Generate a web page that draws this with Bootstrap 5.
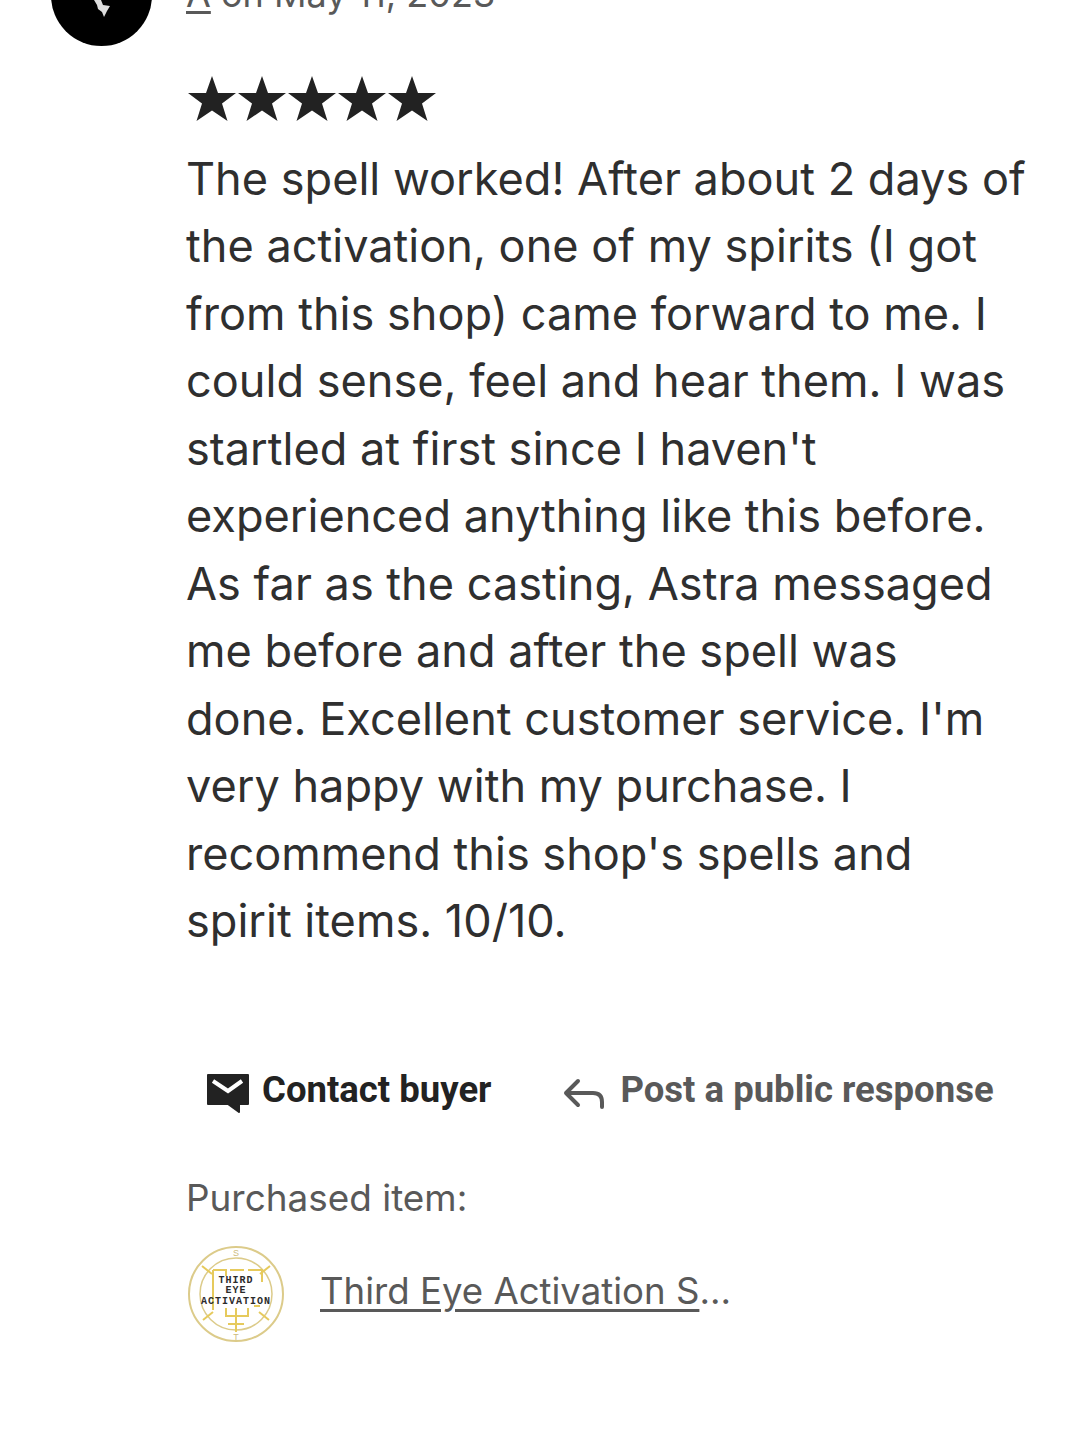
<!DOCTYPE html>
<html lang="en">
<head>
<meta charset="utf-8">
<title>Review</title>
<link href="https://cdn.jsdelivr.net/npm/bootstrap@5.3.0/dist/css/bootstrap.min.css" rel="stylesheet">
<style>
html,body{height:100%;background:#fff;overflow:hidden}
body{font-family:"Inter","Noto Sans",sans-serif;color:#222}
.rv-page{margin-top:-55px;padding-left:51px}
.rv-avatar{width:101px;height:101px;flex:none;background:#000;border-radius:50%;margin-right:34px}
.rv-main{width:850px}
.rv-byline{font-size:36px;line-height:60px;height:60px;color:#595959;white-space:nowrap;margin-top:19px}
.rv-byline u{text-underline-offset:4px}
.rv-stars{margin-top:51px;height:50px;margin-bottom:19.5px}
.rv-text{font-size:45.1px;line-height:67.5px;margin:0;white-space:nowrap;color:#2f2f2f}
.rv-act{margin-top:105.5px;height:60px;font-family:"Roboto",sans-serif;font-weight:700;font-size:36.5px;white-space:nowrap}
.rv-contact{color:#222;margin-left:20px}
.rv-post{color:#595959;margin-left:72px}
.rv-label{font-size:36.9px;line-height:50px;color:#595959;margin-top:52.5px}
.rv-thumb{width:100px;height:100px;flex:none}
.rv-item{margin-top:21px}
.rv-link{font-size:36.6px;color:#595959;margin-left:34px;margin-bottom:5px;text-decoration:underline;text-underline-offset:5px}
.rv-ellipsis{font-size:36.6px;color:#595959;margin-bottom:5px}
.rv-sigil{font-family:"Liberation Mono",monospace;font-weight:700;font-size:10px;letter-spacing:1px;fill:#2b2b2b;text-anchor:middle}
.rv-rune{font-family:"Liberation Sans",sans-serif;font-size:9px;fill:#cdbb7c;text-anchor:middle}
</style>
</head>
<body>
<div class="rv-page d-flex align-items-start">
  <div class="rv-avatar d-flex justify-content-center">
    <svg width="24" height="80" viewBox="0 0 24 80"><path fill="#dddddd" d="M4 55H11L13 60 20 61 17 66 14 72 12 67 8 64 7 60Z"/></svg>
  </div>
  <div class="rv-main">
    <div class="rv-byline"><u>A</u> on May 11, 2023</div>
    <div class="rv-stars d-flex">
      <svg width="250" height="50" viewBox="-1 0 250 50" fill="#222"><path d="M25 1 31 18H49L35 28.500 40.500 46 25 35.500 9.500 46 15 28.500 1 18H19Z"/><path transform="translate(50)" d="M25 1 31 18H49L35 28.500 40.500 46 25 35.500 9.500 46 15 28.500 1 18H19Z"/><path transform="translate(100)" d="M25 1 31 18H49L35 28.500 40.500 46 25 35.500 9.500 46 15 28.500 1 18H19Z"/><path transform="translate(150)" d="M25 1 31 18H49L35 28.500 40.500 46 25 35.500 9.500 46 15 28.500 1 18H19Z"/><path transform="translate(200)" d="M25 1 31 18H49L35 28.500 40.500 46 25 35.500 9.500 46 15 28.500 1 18H19Z"/></svg>
    </div>
    <p class="rv-text">The spell worked! After about 2 days of<br>the activation, one of my spirits (I got<br>from this shop) came forward to me. I<br>could sense, feel and hear them. I was<br>startled at first since I haven't<br>experienced anything like this before.<br>As far as the casting, Astra messaged<br>me before and after the spell was<br>done. Excellent customer service. I'm<br>very happy with my purchase. I<br>recommend this shop's spells and<br>spirit items. 10/10.</p>
    <div class="rv-act d-flex align-items-center">
      <span class="rv-contact d-flex align-items-center gap-2">
        <svg class="mt-2" width="44" height="42" viewBox="0 0 44 42"><path fill="#222" stroke="#222" stroke-width="2" stroke-linejoin="round" d="M2 2H42V31H33V39L22 31H2Z"/><path d="M7 8 22 18 36 8" fill="none" stroke="#fff" stroke-width="4"/></svg>
        <span class="ms-1">Contact buyer</span></span>
      <span class="rv-post d-flex align-items-center gap-3">
        <svg width="41" height="40" viewBox="0 0 41 40" fill="none" stroke="#595959" stroke-width="4" stroke-linecap="round" stroke-linejoin="round"><path d="M15 11 3 23 15 35M3 23H30Q39 23 39 32V37"/></svg>
        Post a public response</span>
    </div>
    <div class="rv-label">Purchased item:</div>
    <div class="rv-item d-flex align-items-center">
      <svg class="rv-thumb" viewBox="0 0 100 100">
        <circle cx="50" cy="50" r="47" fill="#fff" stroke="#dccb8a" stroke-width="2"/>
        <circle cx="50" cy="50" r="36" fill="none" stroke="#dccb8a" stroke-width="1.500"/>
        <path d="M27 26V66M27 26H40V32M44 26H58M62 26H76V38M68 62H74M40 64V72H62V64M50 64V88M42 80H58M16 22 26 30M84 22 74 30M17 76 27 68M83 76 73 68" fill="none" stroke="#e6ca5c" stroke-width="2"/>
        <text class="rv-rune" x="50" y="12">S</text><text class="rv-rune" x="50" y="96">T</text>
        <text class="rv-sigil" x="50" y="39">THIRD</text><text class="rv-sigil" x="50" y="49">EYE</text><text class="rv-sigil" x="50" y="60">ACTIVATION</text>
      </svg>
      <span class="rv-link">Third Eye Activation S</span><span class="rv-ellipsis">...</span>
    </div>
  </div>
</div>
</body>
</html>
